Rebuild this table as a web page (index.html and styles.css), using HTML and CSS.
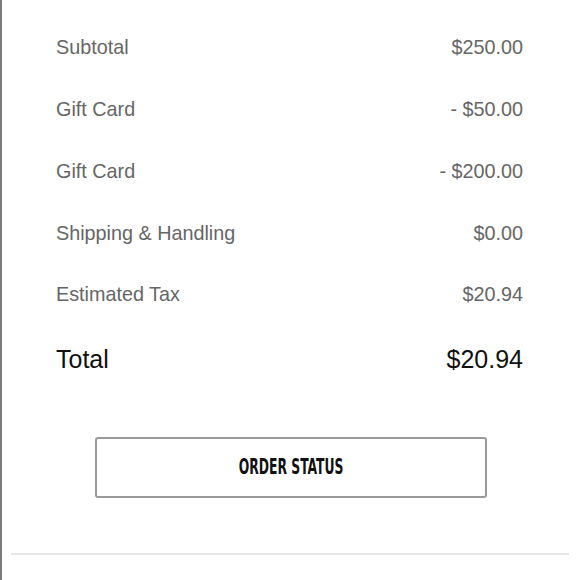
FILE: index.html
```html
<!DOCTYPE html>
<html lang="en">
<head>
  <meta charset="UTF-8" />
  <meta name="viewport" content="width=device-width, initial-scale=1.0"/>
  <title>Order Summary</title>
  <link rel="stylesheet" href="styles.css">
</head>
<body>
  <div class="page">
    <div class="summary">
      <div class="row">
        <span>Subtotal</span>
        <span>$250.00</span>
      </div>
      <div class="row">
        <span>Gift Card</span>
        <span>- $50.00</span>
      </div>
      <div class="row">
        <span>Gift Card</span>
        <span>- $200.00</span>
      </div>
      <div class="row">
        <span>Shipping &amp; Handling</span>
        <span>$0.00</span>
      </div>
      <div class="row">
        <span>Estimated Tax</span>
        <span>$20.94</span>
      </div>
      <div class="row total">
        <span>Total</span>
        <span>$20.94</span>
      </div>
    </div>

    <button class="status-btn"><span class="label">ORDER STATUS</span></button>

    <hr class="divider">
  </div>
</body>
</html>
```

FILE: styles.css
```css
body {
  margin: 0;
  font-family: "Liberation Sans", Arial, sans-serif;
  background: #fff;
  color: #333;
}

/* Page with the grey rule down the left edge */
.page {
  min-height: 580px;
  border-left: 2px solid #7a7a7a;
  box-sizing: border-box;
  padding-top: 17px;
}

/* Order lines */
.summary {
  padding: 0 57px 0 54px;
}

.row {
  display: flex;
  justify-content: space-between;
  align-items: center;
  height: 61.75px;
  font-size: 19.8px;
  color: #666;
}

.row.total {
  height: 68px;
  font-size: 25px;
  color: #111;
}

/* Outlined button */
.status-btn {
  display: block;
  width: 392px;
  height: 61px;
  margin: 43px auto 0 auto;
  padding: 0;
  border: 2px solid #9a9a9a;
  border-radius: 3px;
  background: #fff;
  color: #111;
  cursor: pointer;
}

.status-btn .label {
  display: inline-block;
  font-family: "DejaVu Sans", sans-serif;
  font-stretch: condensed;
  font-weight: bold;
  font-size: 20.5px;
  transform: scaleX(0.67);
}

.divider {
  margin: 55px 11px 0 9px;
  border: none;
  border-top: 2px solid #e6e6e6;
}
```
